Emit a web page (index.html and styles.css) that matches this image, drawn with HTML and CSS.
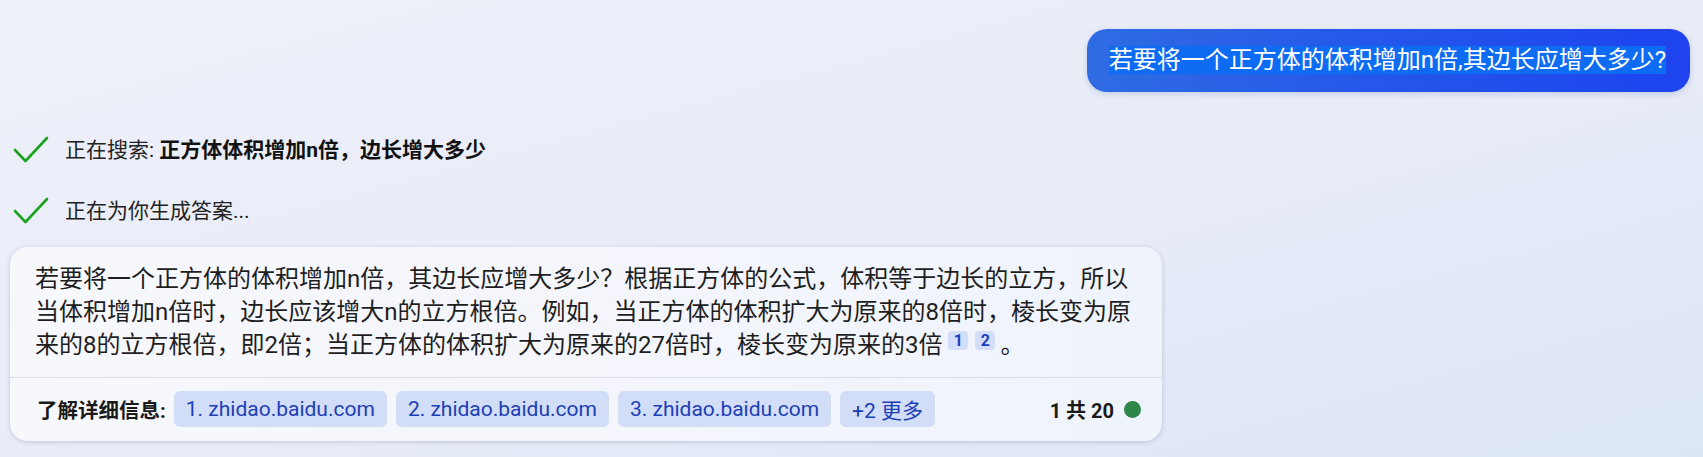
FILE: index.html
```html
<!DOCTYPE html>
<html lang="zh-CN">
<head>
<meta charset="utf-8">
<title>Chat</title>
<link rel="stylesheet" href="styles.css">
</head>
<body>
<main class="chat">
  <div class="user-row">
    <div class="user-bubble"><span class="sel">若要将一个正方体的体积增加n倍,其边长应增大多少?</span></div>
  </div>

  <div class="status">
    <svg class="check" viewBox="0 0 36 28" width="36" height="28"><path d="M2 14 L12.5 25 L34 2"/></svg>
    <span>正在搜索: <b>正方体体积增加n倍，边长增大多少</b></span>
  </div>
  <div class="status status-2">
    <svg class="check" viewBox="0 0 36 28" width="36" height="28"><path d="M2 14 L12.5 25 L34 2"/></svg>
    <span>正在为你生成答案...</span>
  </div>

  <section class="card">
    <p class="answer">若要将一个正方体的体积增加n倍，其边长应增大多少？根据正方体的公式，体积等于边长的立方，所以当体积增加n倍时，边长应该增大n的立方根倍。例如，当正方体的体积扩大为原来的8倍时，棱长变为原来的8的立方根倍，即2倍；当正方体的体积扩大为原来的27倍时，棱长变为原来的3倍<span class="cite">1</span><span class="cite">2</span>。</p>
    <div class="footer">
      <span class="label">了解详细信息:</span>
      <a class="chip">1. zhidao.baidu.com</a>
      <a class="chip">2. zhidao.baidu.com</a>
      <a class="chip">3. zhidao.baidu.com</a>
      <a class="chip">+2 更多</a>
      <span class="count">1 共 20</span>
      <span class="dot"></span>
    </div>
  </section>
</main>
</body>
</html>
```

FILE: styles.css
```css
* { box-sizing: border-box; }
html, body { margin: 0; height: 100%; }
body {
  background: linear-gradient(165deg, #eef0f9 0%, #e8ecf8 55%, #dce5f6 100%);
  font-family: Roboto, "Noto Sans CJK SC", sans-serif;
  color: #1c1c1c;
  overflow: hidden;
}
.chat {
  display: flex;
  flex-direction: column;
  padding: 29px 13px 0 10px;
}
.user-row { display: flex; justify-content: flex-end; }
.user-bubble {
  background: linear-gradient(90deg, #2f6ce3 0%, #2356ea 50%, #1e43ef 100%);
  color: #fff;
  font-size: 24px;
  line-height: 33px;
  padding: 15px 24px 15px 22px;
  border-radius: 20px;
  box-shadow: 0 2px 6px rgba(30, 60, 160, 0.18);
}
.sel { background: #0d6bf4; }

.status {
  display: flex;
  align-items: center;
  gap: 16px;
  margin-top: 43px;
  padding-left: 3px;
  font-size: 21px;
  line-height: 30px;
  color: #222;
}
.status-2 { margin-top: 31px; }
.status b { font-weight: 700; color: #111; }
.check { flex: none; }
.check path {
  fill: none;
  stroke: #1ea321;
  stroke-width: 2.6;
  stroke-linecap: round;
  stroke-linejoin: round;
}

.card {
  margin-top: 21px;
  width: 1152px;
  background: linear-gradient(90deg, #f7f8fc 0%, #f3f5fc 70%, #eef3fc 100%);
  border-radius: 18px;
  box-shadow: 0 1px 5px rgba(40, 50, 90, 0.2);
}
.answer {
  margin: 0;
  padding: 16px 25px 15px 25px;
  font-size: 24px;
  line-height: 33px;
  color: #1e1e1e;
}
.cite {
  display: inline-block;
  min-width: 20px;
  height: 19px;
  margin-left: 6px;
  padding: 0 4px;
  border-radius: 4px;
  background: #d3defa;
  color: #1b3fbd;
  font-size: 16px;
  font-weight: 700;
  line-height: 19px;
  text-align: center;
  vertical-align: 7px;
}
.cite + .cite { margin-left: 7px; margin-right: 5px; }

.footer {
  display: flex;
  align-items: center;
  gap: 9px;
  border-top: 1px solid #dcdee6;
  padding: 13px 21px 14px 27px;
}
.label {
  font-size: 20.5px;
  font-weight: 700;
  color: #1a1a1a;
  margin-right: -1px;
}
.chip {
  display: inline-flex;
  align-items: center;
  height: 36px;
  padding: 0 12px;
  border-radius: 6px;
  background: #d2ddf7;
  color: #1d3fb6;
  font-size: 21px;
  text-decoration: none;
}
.count {
  margin-left: auto;
  font-size: 20px;
  font-weight: 700;
  color: #1a1a1a;
  margin-right: 1px;
}
.dot {
  width: 17px;
  height: 17px;
  border-radius: 50%;
  background: #2e8748;
}
```
